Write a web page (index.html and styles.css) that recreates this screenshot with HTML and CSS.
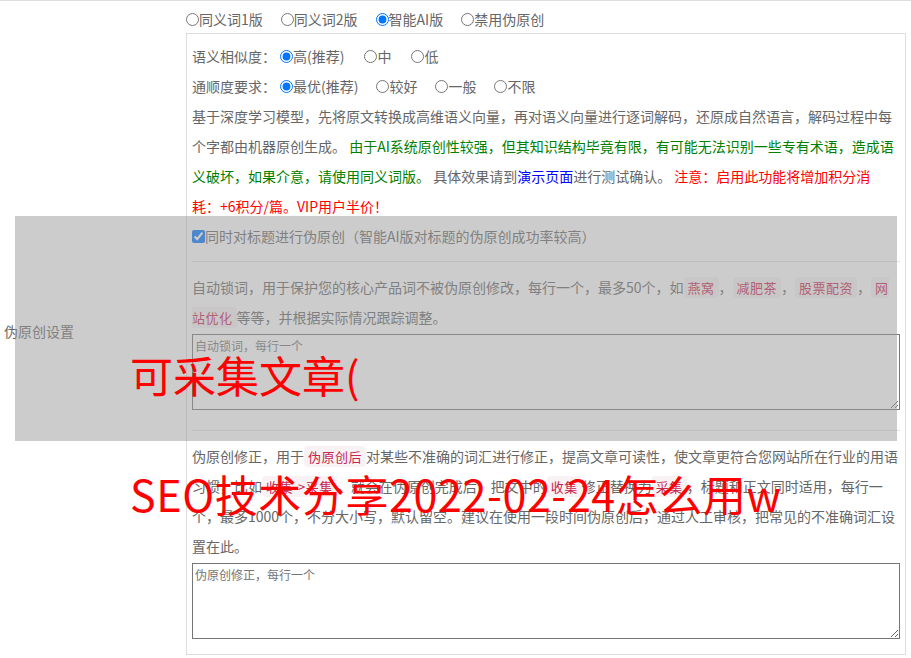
FILE: index.html
```html
<!DOCTYPE html>
<html lang="zh-CN">
<head>
<meta charset="utf-8">
<title>伪原创设置</title>
<link rel="stylesheet" href="styles.css">
</head>
<body>
<div class="form-row">
  <div class="label-cell">伪原创设置</div>
  <div class="field-cell">
    <div class="mode-row">
      <label class="opt"><input type="radio" name="mode">同义词1版</label>
      <label class="opt"><input type="radio" name="mode">同义词2版</label>
      <label class="opt"><input type="radio" name="mode" checked>智能AI版</label>
      <label class="opt"><input type="radio" name="mode">禁用伪原创</label>
    </div>
    <div class="panel">
      <div class="opt-row">
        <span class="opt-title">语义相似度：</span>
        <label class="opt opt-wide"><input type="radio" name="sim" checked>高(推荐)</label>
        <label class="opt opt-wide"><input type="radio" name="sim">中</label>
        <label class="opt opt-wide"><input type="radio" name="sim">低</label>
      </div>
      <div class="opt-row">
        <span class="opt-title">通顺度要求：</span>
        <label class="opt"><input type="radio" name="flu" checked>最优(推荐)</label>
        <label class="opt"><input type="radio" name="flu">较好</label>
        <label class="opt"><input type="radio" name="flu">一般</label>
        <label class="opt"><input type="radio" name="flu">不限</label>
      </div>
      <p class="desc">基于深度学习模型，先将原文转换成高维语义向量，再对语义向量进行逐词解码，还原成自然语言，解码过程中每个字都由机器原创生成。 <span class="green">由于AI系统原创性较强，但其知识结构毕竟有限，有可能无法识别一些专有术语，造成语义破坏，如果介意，请使用同义词版。</span> 具体效果请到<a class="blue" href="#">演示页面</a>进行测试确认。 <span class="red">注意：启用此功能将增加积分消<span class="nb">耗：+6积分</span>/篇。VIP用户半价！</span></p>
      <div class="opt-row">
        <label class="opt"><input type="checkbox" checked>同时对标题进行伪原创（智能AI版对标题的伪原创成功率较高）</label>
      </div>
      <div class="sep"></div>
      <p class="desc">自动锁词，用于保护您的核心产品词不被伪原创修改，每行一个，最多50个，如<code class="kw">燕窝</code>，<code class="kw">减肥茶</code>，<code class="kw">股票配资</code>，<code class="kw">网站优化</code>等等，并根据实际情况跟踪调整。</p>
      <textarea class="ta ta-mid" placeholder="自动锁词，每行一个"></textarea>
      <div class="sep"></div>
      <p class="desc">伪原创修正，用于<code class="kw">伪原创后</code>对某些不准确的词汇进行修正，提高文章可读性，使文章更符合您网站所在行业的用语习惯，比如<code class="kw">收集-&gt;采集</code>，就会在伪原创完成后，把文中的<code class="kw">收集</code>修正替换为<code class="kw">采集</code>，标题和正文同时适用，每行一个，最多1000个，不分大小写，默认留空。建议在使用一段时间伪原创后，通过人工审核，把常见的不准确词汇设置在此。</p>
      <textarea class="ta" placeholder="伪原创修正，每行一个"></textarea>
    </div>
  </div>
</div>
<div class="mask"></div>
<div class="wm wm1">可采集文章(</div>
<div class="wm wm2">SEO技术分享2022-02-24怎么用w</div>
</body>
</html>
```

FILE: styles.css
```css
* { box-sizing: border-box; }

body {
  margin: 0;
  background: #fff;
  color: #666;
  font-family: "Noto Sans CJK SC", "Microsoft YaHei", sans-serif;
  font-size: 14px;
}

.form-row {
  display: grid;
  grid-template-columns: 186px 1fr;
  border-top: 1px solid #ddd;
}

.label-cell {
  display: flex;
  align-items: center;
  padding-left: 4px;
}

.field-cell {
  padding: 0 5px 5px 0;
}

.mode-row {
  height: 32px;
  padding-top: 4px;
  line-height: 28px;
  display: flex;
  align-items: center;
}

.opt {
  display: inline-flex;
  align-items: center;
  margin-right: 18px;
}

.opt-wide { margin-right: 20px; }

.opt input {
  margin: 0;
  width: 13px;
  height: 13px;
}

.panel {
  border: 1px solid #ddd;
  padding: 7px 5px 5px;
}

.opt-row {
  display: flex;
  align-items: center;
  height: 30px;
  line-height: 30px;
}

.opt-title { margin-right: 4px; }

.desc {
  margin: 0;
  line-height: 30px;
}

.green { color: #008000; }
.blue { color: #00f; text-decoration: none; }
.red { color: #f00; }
.nb { white-space: nowrap; }

.kw {
  font-family: "Noto Sans CJK SC", monospace;
  font-size: 13px;
  letter-spacing: 0.5px;
  line-height: 1;
  color: #c7254e;
  background: #f9f2f4;
  border-radius: 4px;
  padding: 1px 4px;
}

.sep {
  height: 1px;
  background: #e5e5e5;
  margin: 10px 0;
}

.ta {
  display: block;
  width: 100%;
  height: 76px;
  margin: 2px 0 10px;
  padding: 2px;
  border: 1px solid #767676;
  border-radius: 0;
  font-family: "Noto Sans CJK SC", sans-serif;
  font-size: 12px;
  color: #333;
  background: #fff;
}

.ta-mid { margin-bottom: 20px; }

.ta::placeholder { color: #757575; }

.mask {
  position: absolute;
  left: 15px;
  top: 216px;
  width: 882px;
  height: 225px;
  background: rgba(153, 153, 153, 0.5);
}

.wm {
  position: absolute;
  left: 130px;
  color: #f00;
  font-size: 43px;
  line-height: 1;
  white-space: nowrap;
}

.wm1 { top: 353px; }
.wm2 { top: 472px; letter-spacing: 0.6px; }
```
